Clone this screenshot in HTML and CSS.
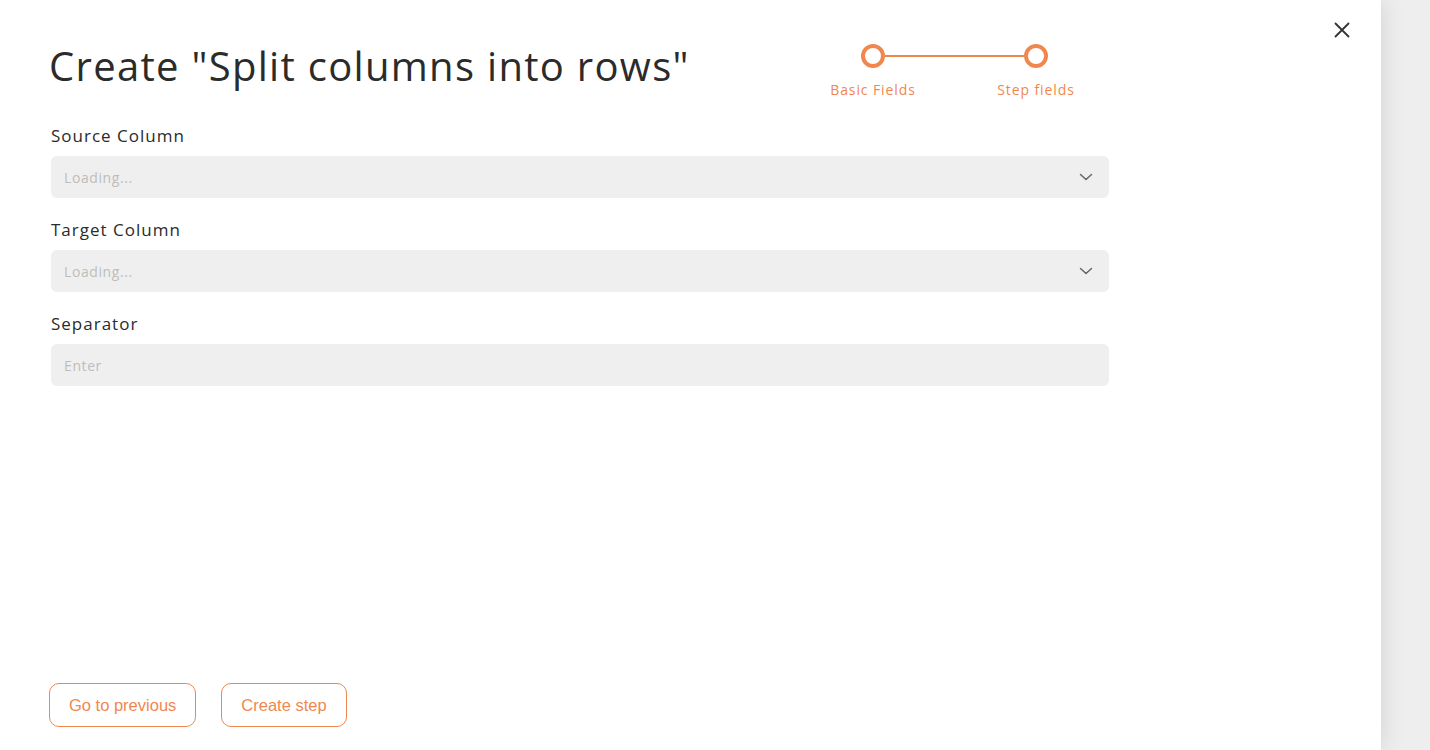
FILE: index.html
```html
<!DOCTYPE html>
<html lang="en">
<head>
  <meta charset="UTF-8" />
  <title>Create step</title>
  <meta name="viewport" content="width=device-width, initial-scale=1.0" />
  <link rel="stylesheet" href="styles.css">
</head>
<body>
  <div class="drawer">
    <button class="close-btn" aria-label="Close">
      <svg width="16" height="16" viewBox="0 0 16 16"><path d="M1.5 1.5 L14.5 14.5 M14.5 1.5 L1.5 14.5" stroke="#333" stroke-width="1.8" stroke-linecap="round"/></svg>
    </button>

    <div class="drawer-head">
      <h1 class="title">Create "Split columns into rows"</h1>
      <div class="stepper">
        <div class="step">
          <span class="dot"></span>
          <span class="step-label">Basic Fields</span>
        </div>
        <div class="step-line"></div>
        <div class="step">
          <span class="dot"></span>
          <span class="step-label">Step fields</span>
        </div>
      </div>
    </div>

    <!-- Form -->
    <div class="form">
      <div class="field">
        <label class="field-label">Source Column</label>
        <div class="select">
          <span class="placeholder">Loading...</span>
          <svg width="14" height="8" viewBox="0 0 14 8"><path d="M1.5 1.5 L7 6.5 L12.5 1.5" fill="none" stroke="#666" stroke-width="1.5" stroke-linecap="round" stroke-linejoin="round"/></svg>
        </div>
      </div>
      <div class="field">
        <label class="field-label">Target Column</label>
        <div class="select">
          <span class="placeholder">Loading...</span>
          <svg width="14" height="8" viewBox="0 0 14 8"><path d="M1.5 1.5 L7 6.5 L12.5 1.5" fill="none" stroke="#666" stroke-width="1.5" stroke-linecap="round" stroke-linejoin="round"/></svg>
        </div>
      </div>
      <div class="field">
        <label class="field-label">Separator</label>
        <input class="text-input" type="text" placeholder="Enter" />
      </div>
    </div>

    <div class="footer">
      <button class="btn">Go to previous</button>
      <button class="btn">Create step</button>
    </div>
  </div>
  <div class="backdrop"></div>
</body>
</html>
```

FILE: styles.css
```css
body {
  margin: 0;
  height: 750px;
  display: flex;
  background-color: #eeeeee;
  font-family: "Open Sans", sans-serif;
  overflow: hidden;
}

.drawer {
  position: relative;
  width: 1381px;
  height: 750px;
  box-sizing: border-box;
  padding: 0 0 23px 49px;
  background-color: white;
  display: flex;
  flex-direction: column;
  box-shadow: 0 0 24px rgba(0, 0, 0, 0.12);
  z-index: 1;
}

.backdrop {
  flex: 1;
}

.close-btn {
  position: absolute;
  top: 22px;
  right: 31px;
  width: 16px;
  height: 16px;
  padding: 0;
  border: none;
  background: none;
  cursor: pointer;
}

.close-btn svg {
  display: block;
}

.drawer-head {
  display: flex;
  align-items: flex-start;
  height: 124px;
}

.title {
  margin: 38px 0 0 0;
  width: 812px;
  font-size: 40px;
  font-weight: 400;
  line-height: 56px;
  color: #2b2b2b;
  letter-spacing: 1.3px;
}

.stepper {
  display: flex;
  align-items: flex-start;
  margin-top: 44px;
}

.step {
  width: 24px;
  display: flex;
  flex-direction: column;
  align-items: center;
}

.dot {
  width: 16px;
  height: 16px;
  border: 4px solid #f0874f;
  border-radius: 50%;
  background: white;
}

.step-label {
  margin-top: 12px;
  white-space: nowrap;
  font-size: 14px;
  letter-spacing: 0.9px;
  color: #f0874f;
}

.step-line {
  width: 139px;
  height: 2px;
  margin-top: 11px;
  background-color: #f0874f;
}

.form {
  padding-left: 2px;
  width: 1058px;
  display: flex;
  flex-direction: column;
  gap: 20px;
}

.field {
  display: flex;
  flex-direction: column;
}

.field-label {
  font-size: 17px;
  color: #2b2b2b;
  letter-spacing: 1px;
  line-height: 24px;
  margin-bottom: 8px;
}

.select,
.text-input {
  height: 42px;
  box-sizing: border-box;
  background-color: #efefef;
  border: none;
  border-radius: 6px;
  padding: 0 16px 0 13px;
  font-family: "Open Sans", sans-serif;
  font-size: 14px;
  letter-spacing: 0.6px;
}

.select {
  display: flex;
  align-items: center;
  justify-content: space-between;
}

.placeholder {
  color: #bdbdbd;
}

.text-input::placeholder {
  color: #bdbdbd;
}

.footer {
  margin-top: auto;
  display: flex;
  gap: 25px;
}

.btn {
  height: 44px;
  padding: 0 19px;
  background: white;
  border: 1px solid #f0874f;
  border-radius: 10px;
  color: #f0874f;
  font-family: "Liberation Sans", Arial, sans-serif;
  font-size: 16.5px;
  cursor: pointer;
}
```
